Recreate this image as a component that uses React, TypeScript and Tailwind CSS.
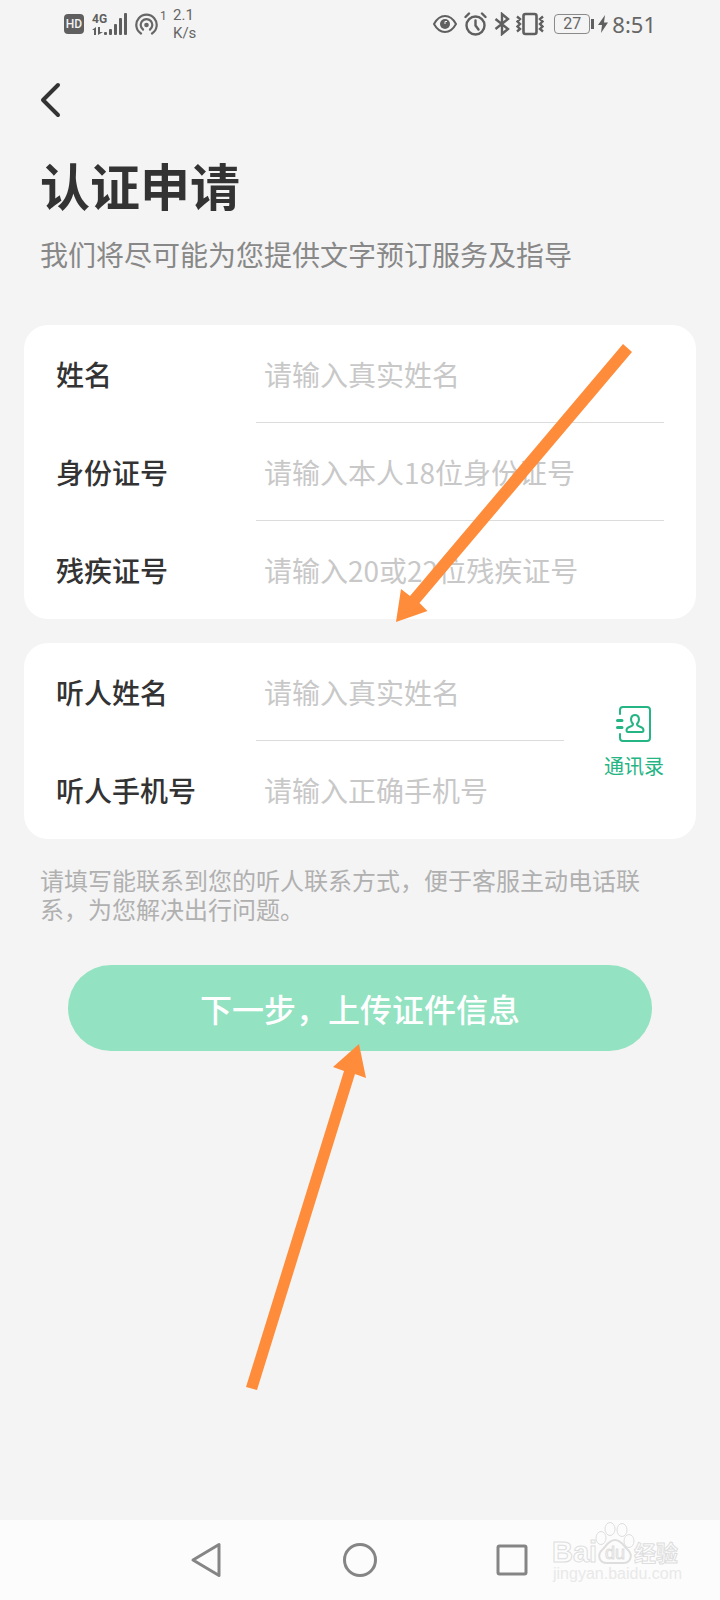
import React from "react";

type FieldProps = {
  id: string;
  label: string;
  placeholder: string;
  type?: string;
  last?: boolean;
};

function Field({ id, label, placeholder, type = "text", last }: FieldProps) {
  return (
    <div className="flex h-[98px]">
      <label htmlFor={id} className="flex w-[200px] shrink-0 items-center text-[28px] font-medium text-[#333333]">
        {label}
      </label>
      <div className={`min-w-0 flex-1 ${last ? "" : "border-b border-[#dcdcdc]"}`}>
        <input
          id={id}
          type={type}
          placeholder={placeholder}
          className="h-full w-full bg-transparent pl-2 text-[28px] text-[#333333] outline-none placeholder:text-[#c8c8c8]"
        />
      </div>
    </div>
  );
}

function StatusBar() {
  return (
    <div className="flex h-12 items-center justify-between px-16 text-[#666666]">
      <div className="flex items-center">
        {/* HD badge */}
        <span className="flex h-5 w-5 items-center justify-center rounded-[4px] bg-[#5f5f5f] font-['Roboto',sans-serif] text-[12px] font-medium leading-none text-[#f3f3f3]">
          HD
        </span>

        {/* Mobile signal */}
        <svg className="ml-2 h-6 w-9" viewBox="0 0 36 24" fill="#5f5f5f" role="img" aria-label="4G">
          <text x="0" y="11" fontSize="12" fontWeight="700" fontFamily="Roboto, sans-serif">
            4G
          </text>
          <path d="M0 18l4-3v8H2v-5H0zM6 15h2v5h3l-5 3z" />
          <rect x="12" y="20" width="3" height="3" rx="1" />
          <rect x="17" y="17" width="3" height="6" rx="1" />
          <rect x="22" y="12" width="3" height="11" rx="1" />
          <rect x="27" y="6" width="3" height="17" rx="1" />
          <rect x="32" y="1" width="3" height="22" rx="1" />
        </svg>

        {/* Hotspot */}
        <svg className="ml-[7px] h-6 w-6" viewBox="0 0 24 24" fill="none" stroke="#666666" strokeWidth="2.2" strokeLinecap="round">
          <circle cx="11.500" cy="13" r="2.300" fill="#666666" stroke="none" />
          <path d="M8 17.500a5.800 5.800 0 1 1 7 0M6 21.500a10.200 10.200 0 1 1 11 0" />
        </svg>
        <span className="mb-4 w-[14px] pl-px font-['Roboto',sans-serif] text-[12px] leading-none">1</span>

        <div className="font-['Roboto',sans-serif] text-[15px] leading-[18px]">
          <div>2.1</div>
          <div>K/s</div>
        </div>
      </div>

      <div className="flex items-center">
        <svg className="h-6 w-6" viewBox="0 0 24 24" fill="none" stroke="#5f5f5f" strokeWidth="2">
          <path d="M1 12C4 6.500 8 4 12 4s8 2.500 11 8c-3 5.500-7 8-11 8S4 17.500 1 12z" />
          <circle cx="12" cy="12" r="5" fill="#5f5f5f" stroke="none" />
          <path d="M12 12V9.500h2" stroke="#f3f3f3" strokeWidth="1" />
        </svg>
        <svg className="ml-[7px] h-6 w-6" viewBox="0 0 24 24" fill="none" stroke="#5f5f5f" strokeWidth="2.400" strokeLinecap="round">
          <circle cx="11.500" cy="13.500" r="9" />
          <path d="M11.500 8.500v5l3 4M1.500 5l3.500-3.500M21.500 5L18 1.500" />
        </svg>
        <svg className="ml-1.5 h-6 w-4" viewBox="0 0 16 24" fill="none" stroke="#5f5f5f" strokeWidth="2.400">
          <path d="M1.500 7L14 17l-6 5V2l6 5L1.500 17" />
        </svg>
        <svg className="ml-1.5 h-6 w-7" viewBox="0 0 28 24" fill="none" stroke="#5f5f5f">
          <rect x="7.500" y="2" width="13" height="20" rx="2" strokeWidth="2.600" />
          <path
            d="M1 4.500l3 2.500-2.500 2.500L4 12l-2.500 2.500L4 17l-3 2.500M27 4.500L24 7l2.500 2.500L24 12l2.500 2.500L24 17l3 2.500"
            strokeWidth="2.400"
          />
        </svg>
        <span className="ml-2.5 flex h-5 w-9 items-center justify-center rounded-[4px] border border-[#8a8a8a] font-['Roboto',sans-serif] text-[16px] leading-none">
          27
        </span>
        <span className="ml-px h-2.5 w-[3px] bg-[#5f5f5f]" />
        <svg className="ml-1 h-[18px] w-2.5" viewBox="0 0 10 18" fill="#5f5f5f">
          <path d="M7 0L0 10h4L3 18l7-10.500H6z" />
        </svg>
        <span className="ml-1 font-['Noto_Sans',sans-serif] text-[22px] leading-none">8:51</span>
      </div>
    </div>
  );
}

function ContactsIcon() {
  return (
    <svg className="h-9 w-9" viewBox="0 0 36 36" fill="none" stroke="#25b484" strokeWidth="2" strokeLinecap="round" aria-hidden="true">
      <path d="M4 8V4a3 3 0 0 1 3-3h24a3 3 0 0 1 3 3v28a3 3 0 0 1-3 3H7a3 3 0 0 1-3-3v-4" />
      <path d="M1.500 14.500h4.500M1.500 21.500h4.500" strokeWidth="3" />
      <path
        d="M17 18c-3.500-4-2-9 2-9s5.500 5 2 9c0 3.500 6.500 2 6.500 6 0 1.500-.5 2-1.500 2H12c-1 0-1.500-.5-1.500-2 0-4 6.500-2.500 6.500-6z"
        strokeLinejoin="round"
      />
    </svg>
  );
}

function Watermark() {
  return (
    <svg
      className="absolute right-9 top-0 h-[70px] w-[136px]"
      viewBox="0 0 136 70"
      fill="#fcfcfc"
      stroke="#dedede"
      fontFamily="'Noto Sans CJK SC', sans-serif"
    >
      <g fontWeight="700">
        <text x="4" y="42" fontSize="29" fontFamily="'Liberation Sans', sans-serif">
          Bai
        </text>
        <text x="86" y="41" fontSize="22">
          经验
        </text>
      </g>
      <ellipse cx="53" cy="18" rx="5" ry="6.500" />
      <ellipse cx="62" cy="9" rx="5" ry="6.500" />
      <ellipse cx="74" cy="10" rx="5" ry="6.500" />
      <ellipse cx="81" cy="21" rx="5" ry="6.500" />
      <path d="M67 20c7 0 9 7 13 10 5 5 3 13-5 13H59c-8 0-10-8-5-13 4-3 6-10 13-10z" strokeWidth="2" />
      <text x="57" y="39" fontSize="18" fontFamily="'Liberation Sans', sans-serif">
        du
      </text>
      <text x="5" y="59" fontSize="16" fill="#e9e9e9" stroke="none" fontFamily="'Liberation Sans', sans-serif">
        jingyan.baidu.com
      </text>
    </svg>
  );
}

function NavBar() {
  return (
    <nav className="relative mt-auto flex h-20 items-center justify-center gap-[116px] bg-[#fcfcfc]">
      <button type="button" aria-label="返回">
        <svg className="h-9 w-9" viewBox="0 0 36 36" fill="none" stroke="#858585" strokeWidth="3" strokeLinejoin="round">
          <path d="M3 18L29 2.500v31z" />
        </svg>
      </button>
      <button type="button" aria-label="主页">
        <svg className="h-9 w-9" viewBox="0 0 36 36" fill="none" stroke="#858585" strokeWidth="3">
          <circle cx="18" cy="18" r="15.500" />
        </svg>
      </button>
      <button type="button" aria-label="最近任务">
        <svg className="h-9 w-9" viewBox="0 0 36 36" fill="none" stroke="#858585" strokeWidth="3">
          <rect x="4" y="4" width="28" height="28" rx="1.500" />
        </svg>
      </button>
      <Watermark />
    </nav>
  );
}

export default function App() {
  return (
    <div className="relative flex min-h-screen flex-col bg-[#f4f4f4] font-['Noto_Sans_CJK_SC',sans-serif]">
      <StatusBar />

      <header className="px-10">
        <button type="button" aria-label="返回" className="mt-6 flex h-14 items-center">
          <svg className="h-9 w-6" viewBox="0 0 24 36" fill="none" stroke="#333333" strokeWidth="4" strokeLinecap="round" strokeLinejoin="round">
            <path d="M18 3L3 18l15 15" />
          </svg>
        </button>
        <h1 className="mt-6 text-[50px] font-bold leading-[64px] text-[#333333]">认证申请</h1>
        <p className="mt-[18px] text-[28px] leading-10 text-[#888888]">我们将尽可能为您提供文字预订服务及指导</p>
      </header>

      <form className="mt-[51px] px-6" onSubmit={(e) => e.preventDefault()}>
        <section className="rounded-3xl bg-white px-8">
          <Field id="name" label="姓名" placeholder="请输入真实姓名" />
          <Field id="idCard" label="身份证号" placeholder="请输入本人18位身份证号" />
          <Field id="disabilityCard" label="残疾证号" placeholder="请输入20或22位残疾证号" last />
        </section>

        <section className="mt-6 flex items-center gap-10 rounded-3xl bg-white px-8">
          <div className="min-w-0 flex-1">
            <Field id="contactName" label="听人姓名" placeholder="请输入真实姓名" />
            <Field id="contactPhone" label="听人手机号" placeholder="请输入正确手机号" type="tel" last />
          </div>
          <button type="button" className="flex shrink-0 flex-col items-center gap-2.5 pt-1 text-[20px] leading-7 text-[#25b484]">
            <ContactsIcon />
            通讯录
          </button>
        </section>

        <p className="mt-[26px] pl-4 pr-10 text-[24px] leading-[29px] text-[#b0b0b0]">
          请填写能联系到您的听人联系方式，便于客服主动电话联系，为您解决出行问题。
        </p>

        <div className="mt-[42px] px-11">
          <button type="submit" className="h-[86px] w-full rounded-full bg-[#93e2c2] text-[32px] font-medium text-white">
            下一步，上传证件信息
          </button>
        </div>
      </form>

      <NavBar />

      {/* Pointer arrows over the form */}
      <svg className="pointer-events-none absolute left-[390px] top-[340px] h-[290px] w-[250px]" viewBox="0 0 250 290" fill="#ff8c3a">
        <path d="M233 4l9 8L29.500 263l8 8L6 282l5-33 9 7z" />
      </svg>
      <svg className="pointer-events-none absolute left-[240px] top-[1040px] h-[355px] w-[130px]" viewBox="0 0 130 355" fill="#ff8c3a">
        <path d="M119 4l7 34-11-4L17 350l-11-3L104 31l-11-4z" />
      </svg>
    </div>
  );
}
